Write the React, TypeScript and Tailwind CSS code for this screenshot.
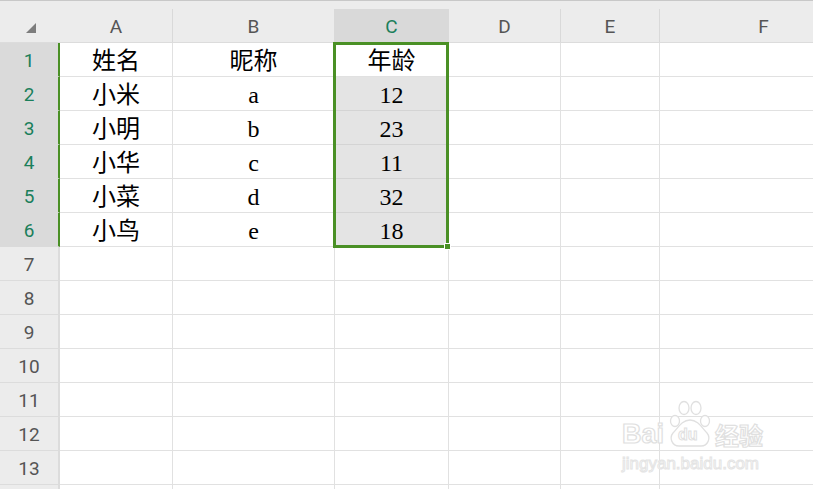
import React from "react";

const cols = [
  { key: "A", w: "w-[113px]" },
  { key: "B", w: "w-[162px]" },
  { key: "C", w: "w-[114px]" },
  { key: "D", w: "w-[112px]" },
  { key: "E", w: "w-[99px]" },
  { key: "F", w: "w-[208px]" },
];

const data: string[][] = [
  ["姓名", "昵称", "年龄"],
  ["小米", "a", "12"],
  ["小明", "b", "23"],
  ["小华", "c", "11"],
  ["小菜", "d", "32"],
  ["小鸟", "e", "18"],
];

const cellFont = { fontFamily: '"Liberation Serif", "Noto Sans CJK SC", serif' };
const headFont = { fontFamily: 'Roboto, "Noto Sans", sans-serif' };

function Watermark() {
  const outline = "text-white [-webkit-text-stroke:1.2px_#e0e0e0]";
  return (
    <div className="absolute left-[622px] top-[400px] w-[160px] pointer-events-none select-none">
      <div className="flex items-end h-[48px]">
        <span className={`text-[27px] font-bold leading-none ${outline}`} style={{ fontFamily: 'Arial, "Liberation Sans", sans-serif' }}>
          Bai
        </span>
        <div className="relative w-[48px] h-[48px] ml-[2px]">
          <svg width="48" height="48" viewBox="0 0 48 48" className="absolute inset-0">
            <g fill="white" stroke="#e0e0e0" strokeWidth="1.3">
              <ellipse cx="9" cy="21" rx="4.5" ry="5.5" />
              <ellipse cx="18" cy="8" rx="5" ry="6.5" />
              <ellipse cx="30" cy="8" rx="5" ry="6.5" />
              <ellipse cx="39" cy="21" rx="4.5" ry="5.5" />
              <path d="M24 20 C16 20 12 28 7 33 C3 38 6 46 13 46 L35 46 C42 46 45 38 41 33 C36 28 32 20 24 20 Z" />
            </g>
          </svg>
          <span className="absolute left-[12px] top-[27px] text-[16px] font-bold leading-none text-white [-webkit-text-stroke:1px_#e0e0e0]" style={{ fontFamily: 'Arial, "Liberation Sans", sans-serif' }}>
            du
          </span>
        </div>
        <span className={`text-[24px] font-bold leading-none ml-[1px] mb-[1px] ${outline}`} style={{ fontFamily: '"Noto Sans CJK SC", sans-serif' }}>
          经验
        </span>
      </div>
      <div className={`text-[17px] leading-none mt-[7px] text-white [-webkit-text-stroke:1px_#e4e4e4]`} style={{ fontFamily: 'Arial, "Liberation Sans", sans-serif' }}>
        jingyan.baidu.com
      </div>
    </div>
  );
}

export default function App() {
  const rows = Array.from({ length: 14 }, (_, i) => i + 1);
  return (
    <div className="relative w-[813px] h-[489px] overflow-hidden bg-white">
      {/* column header */}
      <div className="flex w-[868px] h-[43px] bg-[#ececec] border-t border-[#c8c8c8] border-b border-b-[#dcdcdc]" style={headFont}>
        <div className="w-[60px] shrink-0 relative">
          <svg width="12" height="12" viewBox="0 0 12 12" className="absolute left-[25px] top-[21px]">
            <path d="M1 11 L11 11 L11 1 Z" fill="#7d7d7d" />
          </svg>
        </div>
        {cols.map((c) => (
          <div key={c.key} className={`${c.w} shrink-0 flex flex-col`}>
            <div className="h-[8px]" />
            <div
              className={`flex-1 flex items-center justify-center pt-[3px] text-[19px] border-r border-[#d9d9d9] ${
                c.key === "C" ? "bg-[#d9d9d9] text-[#1b7f5b]" : "text-[#555555]"
              }`}
            >
              {c.key}
            </div>
          </div>
        ))}
      </div>
      {/* rows */}
      {rows.map((r) => {
        const sel = r <= 6;
        const rowData = data[r - 1];
        return (
          <div key={r} className="flex w-[868px] h-[34px]">
            <div
              className={`w-[60px] shrink-0 flex items-center justify-center pt-[3px] text-[19px] border-b ${
                sel
                  ? "bg-[#dadada] text-[#1b7f5b] border-r-2 border-r-[#4a9025] border-b-[#dadada]"
                  : "bg-[#ececec] text-[#555555] border-r-2 border-r-[#dcdcdc] border-b-[#dcdcdc]"
              }`}
              style={headFont}
            >
              {r <= 13 ? r : ""}
            </div>
            {cols.map((c, ci) => {
              const text = rowData && ci < 3 ? rowData[ci] : "";
              const gray = c.key === "C" && r >= 2 && r <= 6;
              return (
                <div
                  key={c.key}
                  className={`${c.w} shrink-0 flex items-center justify-center pt-[3px] text-[24px] text-black border-b border-r border-[#e1e1e1] ${
                    gray ? "bg-[#e4e4e4] border-b-[#d4d4d4]" : ""
                  }`}
                  style={cellFont}
                >
                  {text}
                </div>
              );
            })}
          </div>
        );
      })}
      {/* selection box */}
      <div className="absolute left-[333px] top-[42px] w-[116px] h-[206px] border-[3px] border-[#4a9025] pointer-events-none" />
      <div className="absolute left-[444px] top-[243px] w-[7px] h-[7px] bg-[#4a9025] border border-white" />
      <Watermark />
    </div>
  );
}
